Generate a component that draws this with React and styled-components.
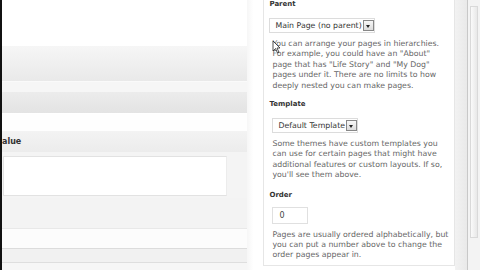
import styled, { createGlobalStyle } from 'styled-components';

const Global = createGlobalStyle`
  html, body {
    margin: 0;
    padding: 0;
    width: 480px;
    height: 270px;
    overflow: hidden;
    background: #fff;
  }
`;

const Page = styled.div`
  display: flex;
  width: 480px;
  height: 270px;
  font-family: "DejaVu Sans", Verdana, sans-serif;
  position: relative;
`;

const Edge = styled.div`
  width: 2px;
  background: #111;
`;

const Main = styled.div`
  width: 246px;
  display: flex;
  flex-direction: column;
`;

const Band = styled.div`
  height: ${(p) => p.h}px;
  background: ${(p) => p.bg};
  border-bottom: ${(p) => (p.line ? `1px solid ${p.line}` : 'none')};
  flex-shrink: 0;
`;

const MetaBox = styled.div`
  display: flex;
  flex-direction: column;
  background: #f4f4f4;
  flex-shrink: 0;
`;

const BoxHead = styled.div`
  height: 21px;
  display: flex;
  align-items: center;
  background: linear-gradient(#f3f3f3, #ececec);
  font-size: 8px;
  font-weight: bold;
  color: #333;
`;

const BoxBody = styled.div`
  padding: 4px 20px 2px 1px;
  height: 40px;
`;

const TextArea = styled.div`
  height: 38px;
  background: #fff;
  border: 1px solid #e2e2e2;
  border-right-color: #ececec;
`;

const Gap = styled.div`
  width: 16px;
  background: linear-gradient(90deg, #f6f6f6, #fff 40%);
`;

const Side = styled.div`
  width: 192px;
  box-sizing: border-box;
  border-left: 1px solid #e6e6e6;
  border-right: 1px solid #e6e6e6;
  border-bottom: 1px solid #e6e6e6;
  height: 266px;
  padding: 0 4px 0 5px;
  background: #fff;
`;

const Label = styled.div`
  font-size: 7px;
  font-weight: bold;
  color: #333;
  margin-top: ${(p) => p.mt}px;
  height: 10px;
  line-height: 10px;
`;

const Select = styled.div`
  box-sizing: border-box;
  display: inline-flex;
  align-items: center;
  height: 15px;
  margin: ${(p) => p.m};
  border: 1px solid #dcdcdc;
  background: #fff;
  font-size: 7.8px;
  color: #333;
  padding-left: 5px;
`;

const Arrow = styled.span`
  box-sizing: border-box;
  width: 11px;
  height: 11px;
  margin-left: 1px;
  border: 1px solid #888;
  background: linear-gradient(#f8f8f8, #dcdcdc);
  display: flex;
  align-items: center;
  justify-content: center;
  &::after {
    content: '';
    border-left: 2.5px solid transparent;
    border-right: 2.5px solid transparent;
    border-top: 3px solid #222;
    margin-top: 2px;
  }
`;

const Help = styled.div`
  margin-top: ${(p) => p.mt}px;
  font-size: 7.8px;
  line-height: 10.4px;
  color: #666;
  padding-left: 3px;
  white-space: nowrap;
`;

const NumInput = styled.div`
  box-sizing: border-box;
  width: 36px;
  height: 17px;
  margin: 7px 0 0 3px;
  border: 1px solid #e0e0e0;
  font-size: 8px;
  color: #444;
  line-height: 15px;
  padding-left: 6px;
`;

const Gutter = styled.div`
  width: 12px;
  background: linear-gradient(90deg, #f2f2f2, #e9e9e9);
`;

const Scroll = styled.div`
  width: 12px;
  border-left: 1px solid #c8c8c8;
  background: #f3f3f3;
  display: flex;
  flex-direction: column;
`;

const Thumb = styled.div`
  margin: 6px 2px 0 2px;
  height: 230px;
  background: linear-gradient(90deg, #fafafa, #e8e8e8);
  border: 1px solid #d9d9d9;
`;

const Cursor = styled.svg`
  position: absolute;
  left: 272px;
  top: 40px;
`;

const Lines = ({ mt, lines }) => (
  <Help mt={mt}>
    {lines.map((l) => (
      <div key={l}>{l}</div>
    ))}
  </Help>
);

export default function App() {
  return (
    <Page>
      <Global />
      <Edge />
      <Main>
        <Band h={46} bg="#fff" />
        <Band h={35} bg="linear-gradient(#f6f6f6, #e9e9e9)" line="#fafafa" />
        <Band h={10} bg="#f6f6f6" />
        <Band h={21} bg="linear-gradient(#ececec, #e3e3e3)" line="#fff" />
        <Band h={17} bg="#fefefe" />
        <MetaBox>
          <BoxHead>alue</BoxHead>
          <BoxBody>
            <TextArea />
          </BoxBody>
        </MetaBox>
        <Band h={30} bg="#f3f3f3" line="#e8e8e8" />
        <Band h={19} bg="#fcfcfc" line="#dcdcdc" />
        <Band h={13} bg="#f1f1f1" line="#dedede" />
        <Band h={12} bg="#f6f6f6" />
      </Main>
      <Gap />
      <Side>
        <Label mt={-1}>Parent</Label>
        <Select m="9px 0 0 0">
          Main Page (no parent)
          <Arrow />
        </Select>
        <Lines
          mt={6}
          lines={[
            'You can arrange your pages in hierarchies.',
            'For example, you could have an "About"',
            'page that has "Life Story" and "My Dog"',
            'pages under it. There are no limits to how',
            'deeply nested you can make pages.',
          ]}
        />
        <Label mt={8}>Template</Label>
        <Select m="9px 0 0 3px">
          Default Template
          <Arrow />
        </Select>
        <Lines
          mt={6}
          lines={[
            'Some themes have custom templates you',
            'can use for certain pages that might have',
            'additional features or custom layouts. If so,',
            "you'll see them above.",
          ]}
        />
        <Label mt={9}>Order</Label>
        <NumInput>0</NumInput>
        <Lines
          mt={6}
          lines={[
            'Pages are usually ordered alphabetically, but',
            'you can put a number above to change the',
            'order pages appear in.',
          ]}
        />
      </Side>
      <Gutter />
      <Scroll>
        <Thumb />
      </Scroll>
      <Cursor width="9" height="14" viewBox="0 0 9 14">
        <path d="M1 1 L1 11 L3.5 8.5 L5.5 13 L7 12.3 L5 8 L8 8 Z" fill="#fff" stroke="#222" strokeWidth="0.8" />
      </Cursor>
    </Page>
  );
}
